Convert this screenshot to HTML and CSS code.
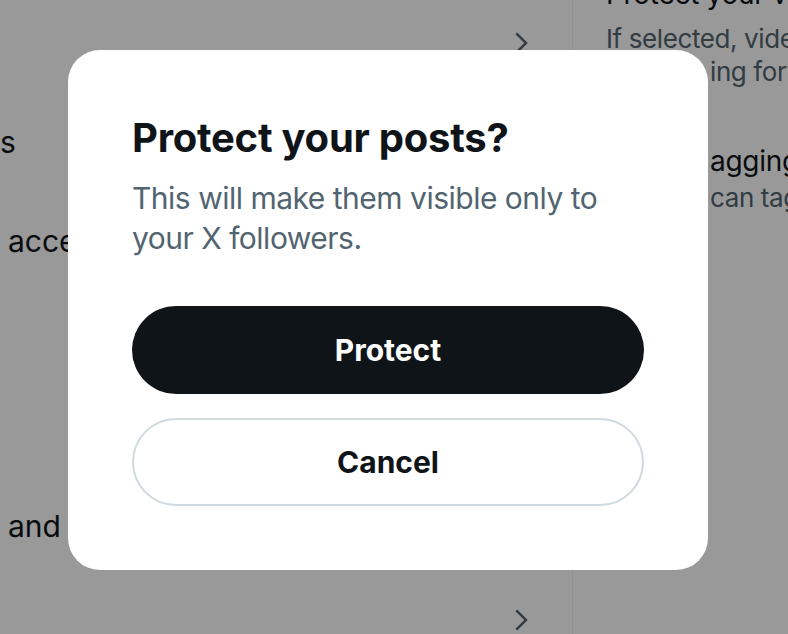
FILE: index.html
```html
<!DOCTYPE html>
<html lang="en">
<head>
<meta charset="utf-8">
<title>Protect your posts?</title>
<link rel="stylesheet" href="styles.css">
</head>
<body>
<div class="page">
  <main class="list">
    <div class="row r1">
      <span class="label"></span>
      <svg class="chev" viewBox="0 0 24 24"><path d="M14.586 12L7.543 4.96l1.414-1.42L17.414 12l-8.457 8.46-1.414-1.42L14.586 12z"/></svg>
    </div>
    <div class="row r2">
      <span class="label tail">s</span>
      <svg class="chev" viewBox="0 0 24 24"><path d="M14.586 12L7.543 4.96l1.414-1.42L17.414 12l-8.457 8.46-1.414-1.42L14.586 12z"/></svg>
    </div>
    <div class="row r3">
      <span class="label">access to your account</span>
      <svg class="chev" viewBox="0 0 24 24"><path d="M14.586 12L7.543 4.96l1.414-1.42L17.414 12l-8.457 8.46-1.414-1.42L14.586 12z"/></svg>
    </div>
    <div class="spacer"></div>
    <div class="row r4">
      <span class="label">and location</span>
      <svg class="chev" viewBox="0 0 24 24"><path d="M14.586 12L7.543 4.96l1.414-1.42L17.414 12l-8.457 8.46-1.414-1.42L14.586 12z"/></svg>
    </div>
    <div class="row r5">
      <span class="label"></span>
      <svg class="chev" viewBox="0 0 24 24"><path d="M14.586 12L7.543 4.96l1.414-1.42L17.414 12l-8.457 8.46-1.414-1.42L14.586 12z"/></svg>
    </div>
  </main>
  <aside class="detail">
    <p class="heading first">Protect your videos</p>
    <p class="desc">If selected, videos you post will be protected</p>
    <p class="desc indent">ing forward</p>
    <p class="heading indent gap">agging</p>
    <p class="desc indent">can tag you</p>
  </aside>
</div>

<div class="backdrop"></div>

<div class="modal" role="dialog" aria-labelledby="dlg-title">
  <h1 id="dlg-title" class="modal-title">Protect your posts?</h1>
  <p class="modal-text">This will make them visible only to your X followers.</p>
  <div class="actions">
    <button class="btn btn-primary" type="button">Protect</button>
    <button class="btn btn-secondary" type="button">Cancel</button>
  </div>
</div>
</body>
</html>
```

FILE: styles.css
```css
* { box-sizing: border-box; }

html, body {
  margin: 0;
  padding: 0;
  width: 788px;
  height: 634px;
  overflow: hidden;
  background: #ffffff;
  font-family: Inter, "Noto Sans", sans-serif;
  color: #0f1419;
}

.page {
  display: flex;
  width: 788px;
  height: 634px;
  overflow: hidden;
}

.list {
  flex: 0 0 573px;
  border-right: 1px solid #eff3f4;
  display: flex;
  flex-direction: column;
}

.row {
  display: flex;
  align-items: center;
  justify-content: space-between;
  padding: 0 36px 0 8px;
  font-size: 30px;
  line-height: 40px;
  white-space: nowrap;
  flex: 0 0 auto;
}

.r1 { height: 86px; }
.r2 { height: 112px; }
.r3 { height: 86px; }
.spacer { flex: 0 0 194px; }
.r4 { height: 96px; }
.r5 { height: 92px; }

.label.tail { margin-left: -8px; }

.chev {
  width: 30px;
  height: 30px;
  fill: #536471;
  flex: 0 0 auto;
}

.detail {
  flex: 1 1 auto;
  padding-left: 33px;
  margin-top: -26px;
  white-space: nowrap;
  overflow: hidden;
}

.detail p { margin: 0; }

.heading {
  font-size: 28px;
  line-height: 40px;
  font-weight: 400;
  color: #0f1419;
  letter-spacing: -0.3px;
}

.heading.first { margin-bottom: 8px; }
.heading.gap { margin-top: 53px; }

.desc {
  font-size: 26px;
  line-height: 33px;
  color: #536471;
  letter-spacing: -0.4px;
}

.indent { padding-left: 104px; }

.backdrop {
  position: fixed;
  inset: 0;
  background: rgba(0, 0, 0, 0.4);
}

.modal {
  position: absolute;
  left: 68px;
  top: 50px;
  width: 640px;
  padding: 64px;
  background: #ffffff;
  border-radius: 32px;
  display: flex;
  flex-direction: column;
}

.modal-title {
  margin: 0;
  font-size: 40px;
  line-height: 48px;
  font-weight: 700;
  color: #0f1419;
  letter-spacing: -0.25px;
}

.modal-text {
  margin: 16px 0 48px;
  font-size: 30px;
  line-height: 40px;
  color: #536471;
  letter-spacing: -0.5px;
}

.actions {
  display: flex;
  flex-direction: column;
  gap: 24px;
}

.btn {
  height: 88px;
  border-radius: 44px;
  font-family: Inter, "Noto Sans", sans-serif;
  font-size: 30px;
  font-weight: 700;
  cursor: pointer;
}

.btn-primary {
  background: #0f1419;
  color: #ffffff;
  border: 0;
}

.btn-secondary {
  background: #ffffff;
  color: #0f1419;
  border: 2px solid #cfd9de;
}
```
